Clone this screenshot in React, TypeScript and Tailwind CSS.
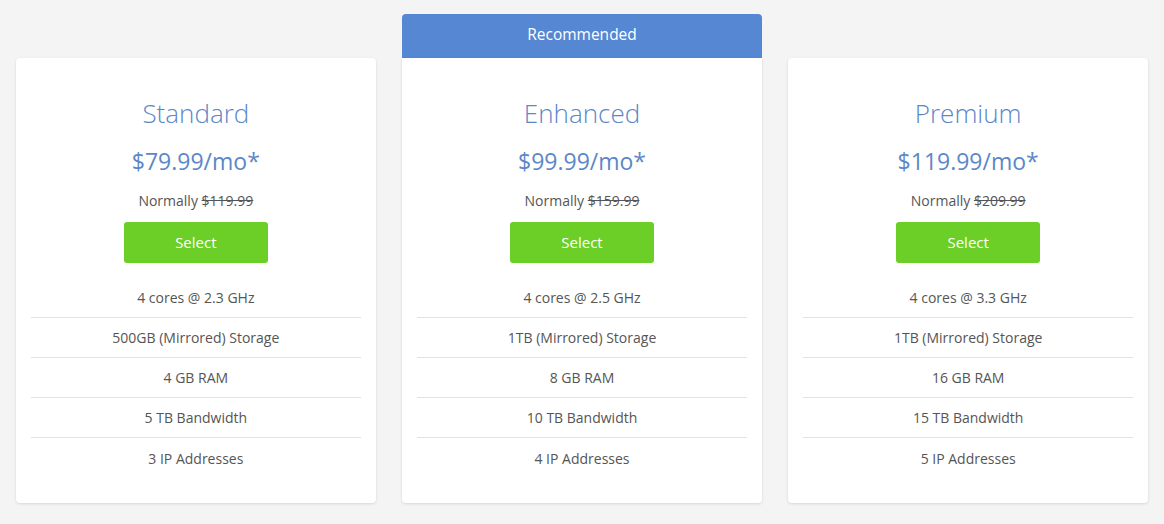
const plans = [
  { name: 'Standard', price: '$79.99/mo*', normal: '$119.99', features: ['4 cores @ 2.3 GHz', '500GB (Mirrored) Storage', '4 GB RAM', '5 TB Bandwidth', '3 IP Addresses'] },
  { name: 'Enhanced', price: '$99.99/mo*', normal: '$159.99', recommended: true, features: ['4 cores @ 2.5 GHz', '1TB (Mirrored) Storage', '8 GB RAM', '10 TB Bandwidth', '4 IP Addresses'] },
  { name: 'Premium', price: '$119.99/mo*', normal: '$209.99', features: ['4 cores @ 3.3 GHz', '1TB (Mirrored) Storage', '16 GB RAM', '15 TB Bandwidth', '5 IP Addresses'] },
];

export default function App() {
  return (
    <div className="min-h-[524px] bg-[#f4f4f4] pt-[14px] px-4 text-[#555]" style={{ fontFamily: '"Open Sans", sans-serif' }}>
      <div className="flex gap-[26.5px] items-start">
        {plans.map((p) => (
          <div key={p.name} className="w-[360px] flex flex-col">
            {p.recommended ? (
              <div className="h-[44px] pb-[3px] bg-[#5587d3] rounded-t-[4px] flex items-center justify-center text-white text-[15.5px]">Recommended</div>
            ) : (
              <div className="h-[44px]" />
            )}
            <div className={`bg-white shadow-[0_1px_3px_rgba(0,0,0,0.12)] px-[15px] pt-[37px] pb-[25px] flex flex-col items-center ${p.recommended ? 'rounded-b-[4px]' : 'rounded-[4px]'}`}>
              <div className="text-[26px] font-light text-[#5b87c7] leading-[36px]">{p.name}</div>
              <div className="text-[23px] text-[#5b87c7] leading-[30px] mt-[15px]">{p.price}</div>
              <div className="text-[14px] leading-[20px] mt-[15px]">Normally <span className="line-through">{p.normal}</span></div>
              <button className="mt-[11px] w-[144px] h-[41px] bg-[#6bcf27] rounded-[3px] text-white text-[15px]">Select</button>
              <div className="w-full mt-[15px]">
                {p.features.map((f, i) => (
                  <div key={f} className={`h-[40px] flex items-center justify-center text-[14px] ${i < p.features.length - 1 ? 'border-b border-[#e3e3e3]' : ''}`}>{f}</div>
                ))}
              </div>
            </div>
          </div>
        ))}
      </div>
    </div>
  );
}
